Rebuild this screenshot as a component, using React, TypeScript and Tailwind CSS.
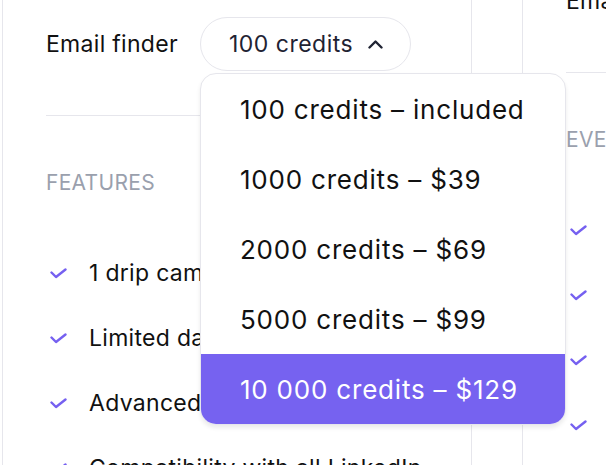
import { useState } from "react"

const options = [
  "100 credits – included",
  "1000 credits – $39",
  "2000 credits – $69",
  "5000 credits – $99",
  "10 000 credits – $129",
]

const features = [
  "1 drip campaign",
  "Limited daily actions",
  "Advanced search filters",
  "Compatibility with all LinkedIn",
]

function CheckIcon() {
  return (
    <svg width="17" height="11" viewBox="0 0 17 11" fill="none" className="shrink-0">
      <path d="M1.5 4.5L6 9L15.5 1.5" stroke="#7560F0" strokeWidth="2.4" strokeLinecap="round" strokeLinejoin="round" />
    </svg>
  )
}

function ChevronUp() {
  return (
    <svg width="15" height="9" viewBox="0 0 15 9" fill="none">
      <path d="M1.5 7.5L7.5 1.5L13.5 7.5" stroke="#1f2333" strokeWidth="2.4" strokeLinecap="round" strokeLinejoin="round" />
    </svg>
  )
}

function FeatureList() {
  return (
    <ul className="mt-[62px] flex flex-col gap-[37px]">
      {features.map((f) => (
        <li key={f} className="flex items-center gap-[22px] pl-[4px] h-[28px] text-[23px] tracking-[0.3px] text-[#111] whitespace-nowrap">
          <CheckIcon />
          <span>{f}</span>
        </li>
      ))}
    </ul>
  )
}

export default function App() {
  const [selected, setSelected] = useState(4)
  const [open, setOpen] = useState(true)

  return (
    <div className="w-[606px] h-[465px] overflow-hidden bg-white" style={{ fontFamily: "Inter, 'Liberation Sans', sans-serif" }}>
      <div className="flex items-start pl-[2px]">
        {/* left plan card */}
        <div className="relative w-[470px] h-[520px] shrink-0 border-x border-[#e6e6ec] px-[43px] pt-[17px]">
          <div className="flex items-center gap-[22px]">
            <span className="text-[23px] tracking-[0.3px] text-[#111] whitespace-nowrap">Email finder</span>
            <div className="relative">
              <button
                onClick={() => setOpen(!open)}
                className="flex items-center gap-[15px] h-[54px] pl-[28px] pr-[27px] rounded-full border border-[#e6e6ec] text-[23px] tracking-[0.5px] text-[#1f2333] whitespace-nowrap"
              >
                <span>100 credits</span>
                <ChevronUp />
              </button>
              {open && (
                <div className="absolute left-0 top-[56px] w-[366px] z-10 rounded-[16px] border border-[#e6e6ec] bg-white shadow-[0_3px_4px_rgba(0,0,0,0.08)] overflow-hidden">
                  {options.map((o, i) => (
                    <div
                      key={o}
                      onClick={() => setSelected(i)}
                      className={
                        i === selected
                          ? "flex items-center h-[70px] px-[39px] text-[26px] tracking-[0.8px] bg-[#7662f0] text-white whitespace-nowrap"
                          : "flex items-center h-[70px] px-[39px] text-[26px] tracking-[0.8px] text-[#111] whitespace-nowrap"
                      }
                    >
                      {o}
                    </div>
                  ))}
                </div>
              )}
            </div>
          </div>
          <div className="mt-[44px] border-t border-[#e6e6ec]" />
          <div className="mt-[53px] h-[28px] flex items-center text-[21px] tracking-[0.3px] text-[#9aa0ad] uppercase">Features</div>
          <FeatureList />
        </div>

        {/* next plan card, partly visible */}
        <div className="ml-[50px] w-[470px] h-[520px] shrink-0 border-l border-[#e6e6ec] px-[43px] -mt-[43px] pt-[17px]">
          <div className="flex items-center gap-[22px] h-[54px]">
            <span className="text-[23px] tracking-[0.3px] text-[#111] whitespace-nowrap">Email finder</span>
          </div>
          <div className="mt-[44px] border-t border-[#e6e6ec]" />
          <div className="mt-[53px] h-[28px] flex items-center text-[21px] tracking-[0.3px] text-[#9aa0ad] uppercase whitespace-nowrap">Everything in Free</div>
          <FeatureList />
        </div>
      </div>
    </div>
  )
}
